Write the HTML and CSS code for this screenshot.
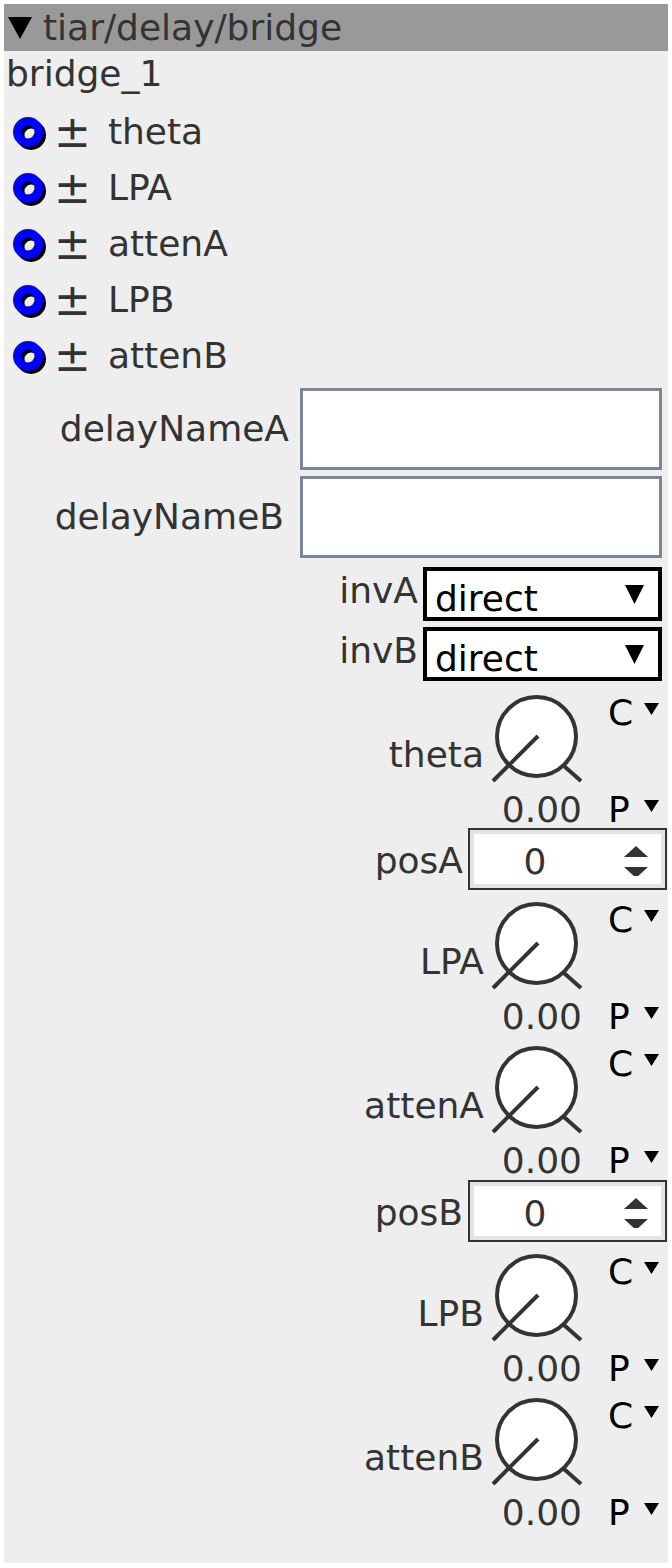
FILE: index.html
```html
<!DOCTYPE html>
<html>
<head>
<meta charset="utf-8">
<title>tiar/delay/bridge</title>
<link rel="stylesheet" href="styles.css">
</head>
<body>
<div class="panel">
  <div class="hdr">
    <svg class="hdr-tri" width="24" height="22" viewBox="0 0 24 22"><polygon points="0,0 24,0 12,22" fill="#000"/></svg>
    <span class="hdr-title">tiar/delay/bridge</span>
  </div>
  <div class="inst">bridge_1</div>

  <div class="mods">
    <div class="mod">
      <svg class="ring" width="40" height="40" viewBox="0 0 40 40"><circle cx="21" cy="23" r="10.75" fill="none" stroke="#000" stroke-width="8.5"/><circle cx="18" cy="20" r="10.75" fill="none" stroke="#0000ff" stroke-width="8.5"/></svg>
      <span class="pm">±</span><span class="mod-name">theta</span>
    </div>
    <div class="mod">
      <svg class="ring" width="40" height="40" viewBox="0 0 40 40"><circle cx="21" cy="23" r="10.75" fill="none" stroke="#000" stroke-width="8.5"/><circle cx="18" cy="20" r="10.75" fill="none" stroke="#0000ff" stroke-width="8.5"/></svg>
      <span class="pm">±</span><span class="mod-name">LPA</span>
    </div>
    <div class="mod">
      <svg class="ring" width="40" height="40" viewBox="0 0 40 40"><circle cx="21" cy="23" r="10.75" fill="none" stroke="#000" stroke-width="8.5"/><circle cx="18" cy="20" r="10.75" fill="none" stroke="#0000ff" stroke-width="8.5"/></svg>
      <span class="pm">±</span><span class="mod-name">attenA</span>
    </div>
    <div class="mod">
      <svg class="ring" width="40" height="40" viewBox="0 0 40 40"><circle cx="21" cy="23" r="10.75" fill="none" stroke="#000" stroke-width="8.5"/><circle cx="18" cy="20" r="10.75" fill="none" stroke="#0000ff" stroke-width="8.5"/></svg>
      <span class="pm">±</span><span class="mod-name">LPB</span>
    </div>
    <div class="mod">
      <svg class="ring" width="40" height="40" viewBox="0 0 40 40"><circle cx="21" cy="23" r="10.75" fill="none" stroke="#000" stroke-width="8.5"/><circle cx="18" cy="20" r="10.75" fill="none" stroke="#0000ff" stroke-width="8.5"/></svg>
      <span class="pm">±</span><span class="mod-name">attenB</span>
    </div>
  </div>

  <div class="field field-a">
    <span class="field-label">delayNameA</span>
    <input class="tbox" type="text" value="">
  </div>
  <div class="field field-b">
    <span class="field-label">delayNameB</span>
    <input class="tbox" type="text" value="">
  </div>

  <div class="sel-row sel-a">
    <span class="sel-label">invA</span>
    <div class="select"><span class="sel-text">direct</span><svg class="sel-tri" width="19" height="19" viewBox="0 0 19 19"><polygon points="0,0 19,0 9.5,19" fill="#000"/></svg></div>
  </div>
  <div class="sel-row sel-b">
    <span class="sel-label">invB</span>
    <div class="select"><span class="sel-text">direct</span><svg class="sel-tri" width="19" height="19" viewBox="0 0 19 19"><polygon points="0,0 19,0 9.5,19" fill="#000"/></svg></div>
  </div>

  <div class="knob">
    <span class="k-label">theta</span>
    <svg class="k-dial" width="96" height="100" viewBox="0 0 96 100"><circle cx="48.5" cy="52.5" r="39.5" fill="#fff" stroke="#333" stroke-width="4"/><line x1="5" y1="97" x2="50" y2="52" stroke="#333" stroke-width="4"/><line x1="76" y1="82" x2="93" y2="97" stroke="#333" stroke-width="4"/></svg>
    <div class="k-c">C<svg class="mtri" width="15" height="12" viewBox="0 0 15 12"><polygon points="0,0 15,0 7.5,12" fill="#000"/></svg></div>
    <span class="k-val">0.00</span>
    <div class="k-p">P<svg class="mtri" width="15" height="12" viewBox="0 0 15 12"><polygon points="0,0 15,0 7.5,12" fill="#000"/></svg></div>
  </div>

  <div class="spin-row">
    <span class="sp-label">posA</span>
    <div class="spin"><span class="sp-val">0</span><svg class="sp-arrows" width="24" height="34" viewBox="0 0 24 34"><polygon points="0,15 12,4 24,15" fill="#333"/><polygon points="0,25 24,25 12,36" fill="#333"/></svg></div>
  </div>

  <div class="knob">
    <span class="k-label">LPA</span>
    <svg class="k-dial" width="96" height="100" viewBox="0 0 96 100"><circle cx="48.5" cy="52.5" r="39.5" fill="#fff" stroke="#333" stroke-width="4"/><line x1="5" y1="97" x2="50" y2="52" stroke="#333" stroke-width="4"/><line x1="76" y1="82" x2="93" y2="97" stroke="#333" stroke-width="4"/></svg>
    <div class="k-c">C<svg class="mtri" width="15" height="12" viewBox="0 0 15 12"><polygon points="0,0 15,0 7.5,12" fill="#000"/></svg></div>
    <span class="k-val">0.00</span>
    <div class="k-p">P<svg class="mtri" width="15" height="12" viewBox="0 0 15 12"><polygon points="0,0 15,0 7.5,12" fill="#000"/></svg></div>
  </div>

  <div class="knob">
    <span class="k-label">attenA</span>
    <svg class="k-dial" width="96" height="100" viewBox="0 0 96 100"><circle cx="48.5" cy="52.5" r="39.5" fill="#fff" stroke="#333" stroke-width="4"/><line x1="5" y1="97" x2="50" y2="52" stroke="#333" stroke-width="4"/><line x1="76" y1="82" x2="93" y2="97" stroke="#333" stroke-width="4"/></svg>
    <div class="k-c">C<svg class="mtri" width="15" height="12" viewBox="0 0 15 12"><polygon points="0,0 15,0 7.5,12" fill="#000"/></svg></div>
    <span class="k-val">0.00</span>
    <div class="k-p">P<svg class="mtri" width="15" height="12" viewBox="0 0 15 12"><polygon points="0,0 15,0 7.5,12" fill="#000"/></svg></div>
  </div>

  <div class="spin-row">
    <span class="sp-label">posB</span>
    <div class="spin"><span class="sp-val">0</span><svg class="sp-arrows" width="24" height="34" viewBox="0 0 24 34"><polygon points="0,15 12,4 24,15" fill="#333"/><polygon points="0,25 24,25 12,36" fill="#333"/></svg></div>
  </div>

  <div class="knob">
    <span class="k-label">LPB</span>
    <svg class="k-dial" width="96" height="100" viewBox="0 0 96 100"><circle cx="48.5" cy="52.5" r="39.5" fill="#fff" stroke="#333" stroke-width="4"/><line x1="5" y1="97" x2="50" y2="52" stroke="#333" stroke-width="4"/><line x1="76" y1="82" x2="93" y2="97" stroke="#333" stroke-width="4"/></svg>
    <div class="k-c">C<svg class="mtri" width="15" height="12" viewBox="0 0 15 12"><polygon points="0,0 15,0 7.5,12" fill="#000"/></svg></div>
    <span class="k-val">0.00</span>
    <div class="k-p">P<svg class="mtri" width="15" height="12" viewBox="0 0 15 12"><polygon points="0,0 15,0 7.5,12" fill="#000"/></svg></div>
  </div>

  <div class="knob">
    <span class="k-label">attenB</span>
    <svg class="k-dial" width="96" height="100" viewBox="0 0 96 100"><circle cx="48.5" cy="52.5" r="39.5" fill="#fff" stroke="#333" stroke-width="4"/><line x1="5" y1="97" x2="50" y2="52" stroke="#333" stroke-width="4"/><line x1="76" y1="82" x2="93" y2="97" stroke="#333" stroke-width="4"/></svg>
    <div class="k-c">C<svg class="mtri" width="15" height="12" viewBox="0 0 15 12"><polygon points="0,0 15,0 7.5,12" fill="#000"/></svg></div>
    <span class="k-val">0.00</span>
    <div class="k-p">P<svg class="mtri" width="15" height="12" viewBox="0 0 15 12"><polygon points="0,0 15,0 7.5,12" fill="#000"/></svg></div>
  </div>
</div>
</body>
</html>
```

FILE: styles.css
```css
html, body {
  margin: 0;
  padding: 0;
  background: #ffffff;
}
body {
  padding: 4px;
  font-family: "DejaVu Sans", "Noto Sans", sans-serif;
  font-size: 36px;
  line-height: 40px;
  color: #333333;
}
.panel {
  width: 664px;
  background: #eeeeee;
  padding-bottom: 32px;
}

/* header */
.hdr {
  height: 47px;
  background: #999999;
  display: flex;
  align-items: center;
  padding-left: 4px;
}
.hdr-tri { display: block; flex: none; margin-top: 1px; }
.hdr-title { margin-left: 11px; color: #333; }

.inst {
  height: 53px;
  box-sizing: border-box;
  padding: 3px 0 0 2px;
}

/* modulation rows */
.mod {
  height: 56px;
  display: flex;
  align-items: center;
  padding-left: 6px;
}
.ring { display: block; flex: none; }
.pm {
  font-size: 44px;
  margin-left: 4px;
  color: #333;
}
.mod-name { margin-left: 17px; }

/* text fields */
.field {
  display: flex;
  align-items: center;
  justify-content: flex-end;
  padding-right: 6px;
}
.field-a { margin-top: 4px; }
.field-b { margin-top: 6px; }
.field-label { margin-right: 11px; }
.field-b .field-label { margin-right: 16px; }
.tbox {
  width: 362px;
  height: 82px;
  box-sizing: border-box;
  border: 3px solid #7a8896;
  background: #ffffff;
  margin: 0;
  padding: 0 8px;
  font: inherit;
  outline: none;
}

/* selects */
.sel-row {
  display: flex;
  align-items: center;
  justify-content: flex-end;
  padding-right: 6px;
}
.sel-a { margin-top: 9px; }
.sel-b { margin-top: 6px; }
.sel-label { margin-right: 5px; padding-bottom: 6px; }
.select {
  width: 239px;
  height: 54px;
  box-sizing: border-box;
  border: 4px solid #000000;
  background: #ffffff;
  display: flex;
  align-items: flex-start;
  justify-content: space-between;
  padding: 0 14px 0 8px;
  color: #000000;
}
.sel-text { margin-top: 8px; }
.sel-tri { display: block; margin-top: 14px; }

/* knobs */
.knob {
  display: grid;
  grid-template-columns: auto 96px 84px;
  grid-template-rows: 104px 40px;
  justify-content: end;
}
.sel-b + .knob { margin-top: 3px; }
.k-label {
  grid-row: 1;
  grid-column: 1;
  align-self: end;
  margin-bottom: 13px;
  padding-right: 4px;
  text-align: right;
}
.k-dial {
  grid-row: 1;
  grid-column: 2;
  align-self: start;
  display: block;
}
.k-c, .k-p {
  grid-column: 3;
  display: flex;
  justify-content: space-between;
  align-items: flex-start;
  padding: 0 9px 0 24px;
  color: #000000;
}
.k-c { grid-row: 1; align-self: start; margin-top: 9px; }
.k-p { grid-row: 2; margin-top: 2px; }
.mtri { display: block; margin-top: 10px; }
.k-val {
  grid-row: 2;
  grid-column: 2;
  text-align: right;
  padding-right: 2px;
  margin-top: 2px;
  white-space: nowrap;
}

/* spin boxes */
.spin-row {
  height: 62px;
  display: flex;
  align-items: center;
  justify-content: flex-end;
  padding-right: 1px;
}
.spin-row + .knob { margin-top: 1px; }
.knob + .knob + .spin-row { margin-top: 1px; }
.sp-label { margin-right: 5px; padding-top: 3px; }
.spin {
  width: 199px;
  height: 62px;
  box-sizing: border-box;
  border: 2px solid #333333;
  box-shadow: inset 0 0 0 4px #e4e4e4;
  background: #ffffff;
  display: flex;
  align-items: center;
}
.sp-val {
  width: 130px;
  text-align: center;
  flex: none;
  padding-top: 6px;
}
.sp-arrows { display: block; margin-left: 24px; flex: none; }
```
